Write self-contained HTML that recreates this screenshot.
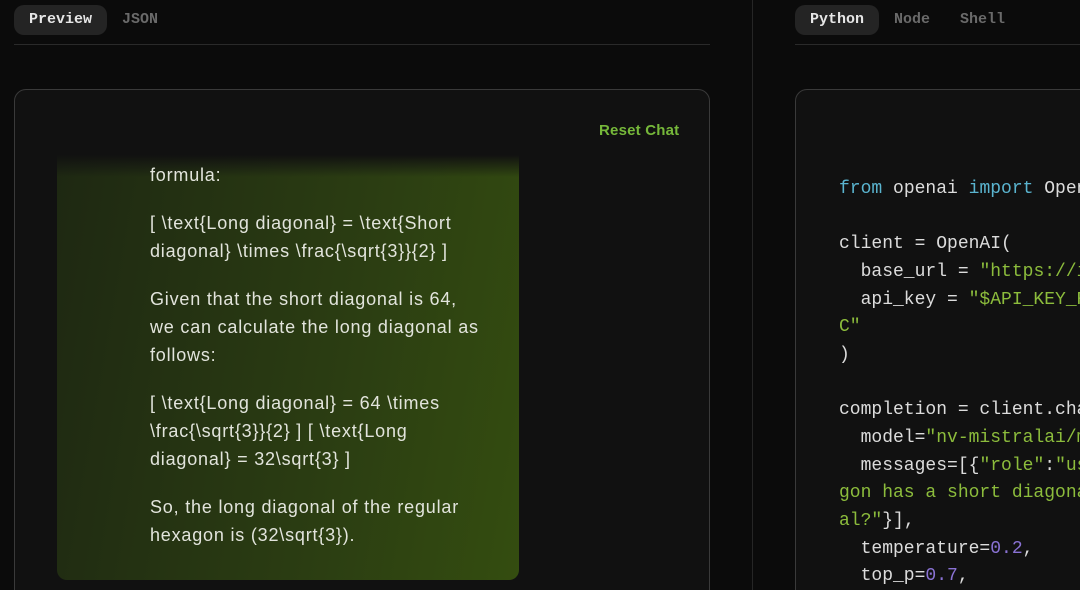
<!DOCTYPE html>
<html><head><meta charset="utf-8"><style>
*{margin:0;padding:0;box-sizing:border-box}
html,body{width:1080px;height:590px;overflow:hidden}
body{background:#0b0b0b;position:relative;font-family:"Liberation Sans",sans-serif}
.tabs{position:absolute;top:5px;display:flex;font-family:"Liberation Mono",monospace;font-size:15px;font-weight:bold}
.tab{height:30px;line-height:30px;padding:0 15px;border-radius:10px;color:#6a6a6a}
.tab.on{background:#242424;color:#e6e6e6}
.hr{position:absolute;top:44px;height:1px;background:#2a2a2a}
.card{position:absolute;top:89px;border:1px solid #3a3a3a;border-radius:12px;background:#111}
.reset{position:absolute;left:599px;top:122px;color:#76b83a;font-weight:bold;font-size:15px;letter-spacing:0.2px}
.bubble{position:absolute;left:57px;top:155px;width:462px;height:425px;border-radius:0 0 10px 10px;background:linear-gradient(100deg,#1e2812 0%,#2b3d12 60%,#344d10 100%);}
.bubble .fade{position:absolute;left:0;top:0;width:100%;height:22px;background:linear-gradient(#111,rgba(17,17,17,0))}
.msg{position:absolute;left:150px;top:161px;width:360px;color:#e2e4dc;font-size:18px;letter-spacing:0.8px;line-height:28px;white-space:nowrap}
.msg p{margin-bottom:20px}
.code{position:absolute;left:839px;top:176px;width:241px;overflow:hidden;font-family:"Liberation Mono",monospace;font-size:18px;line-height:27.65px;color:#dcdcdc;white-space:pre}
.k{color:#5ab4cf}.s{color:#8cbc3c}.n{color:#8a72d4}
</style></head><body>
<div class="tabs" style="left:14px"><div class="tab on">Preview</div><div class="tab">JSON</div></div>
<div class="hr" style="left:14px;width:696px"></div>
<div style="position:absolute;left:752px;top:0;width:1px;height:590px;background:#262626"></div>
<div class="tabs" style="left:795px"><div class="tab on">Python</div><div class="tab">Node</div><div class="tab">Shell</div></div>
<div class="hr" style="left:795px;width:285px"></div>
<div class="card" style="left:14px;width:696px;height:520px"></div>
<div class="card" style="left:795px;width:300px;height:520px"></div>
<div class="reset">Reset Chat</div>
<div class="bubble"><div class="fade"></div></div>
<div class="msg">
<p>formula:</p>
<p>[ \text{Long diagonal} = \text{Short<br>diagonal} \times \frac{\sqrt{3}}{2} ]</p>
<p>Given that the short diagonal is 64,<br>we can calculate the long diagonal as<br>follows:</p>
<p>[ \text{Long diagonal} = 64 \times<br>\frac{\sqrt{3}}{2} ] [ \text{Long<br>diagonal} = 32\sqrt{3} ]</p>
<p>So, the long diagonal of the regular<br>hexagon is (32\sqrt{3}).</p>
</div>
<div class="code"><span class="k">from</span> openai <span class="k">import</span> OpenAI

client = OpenAI(
  base_url = <span class="s">"https://integrate</span>
  api_key = <span class="s">"$API_KEY_REQUIRED</span>
<span class="s">C"</span>
)

completion = client.chat.com
  model=<span class="s">"nv-mistralai/mistr</span>
  messages=[{<span class="s">"role"</span>:<span class="s">"user"</span>
<span class="s">gon has a short diagonal of</span>
<span class="s">al?"</span>}],
  temperature=<span class="n">0.2</span>,
  top_p=<span class="n">0.7</span>,
</div>
</body></html>
